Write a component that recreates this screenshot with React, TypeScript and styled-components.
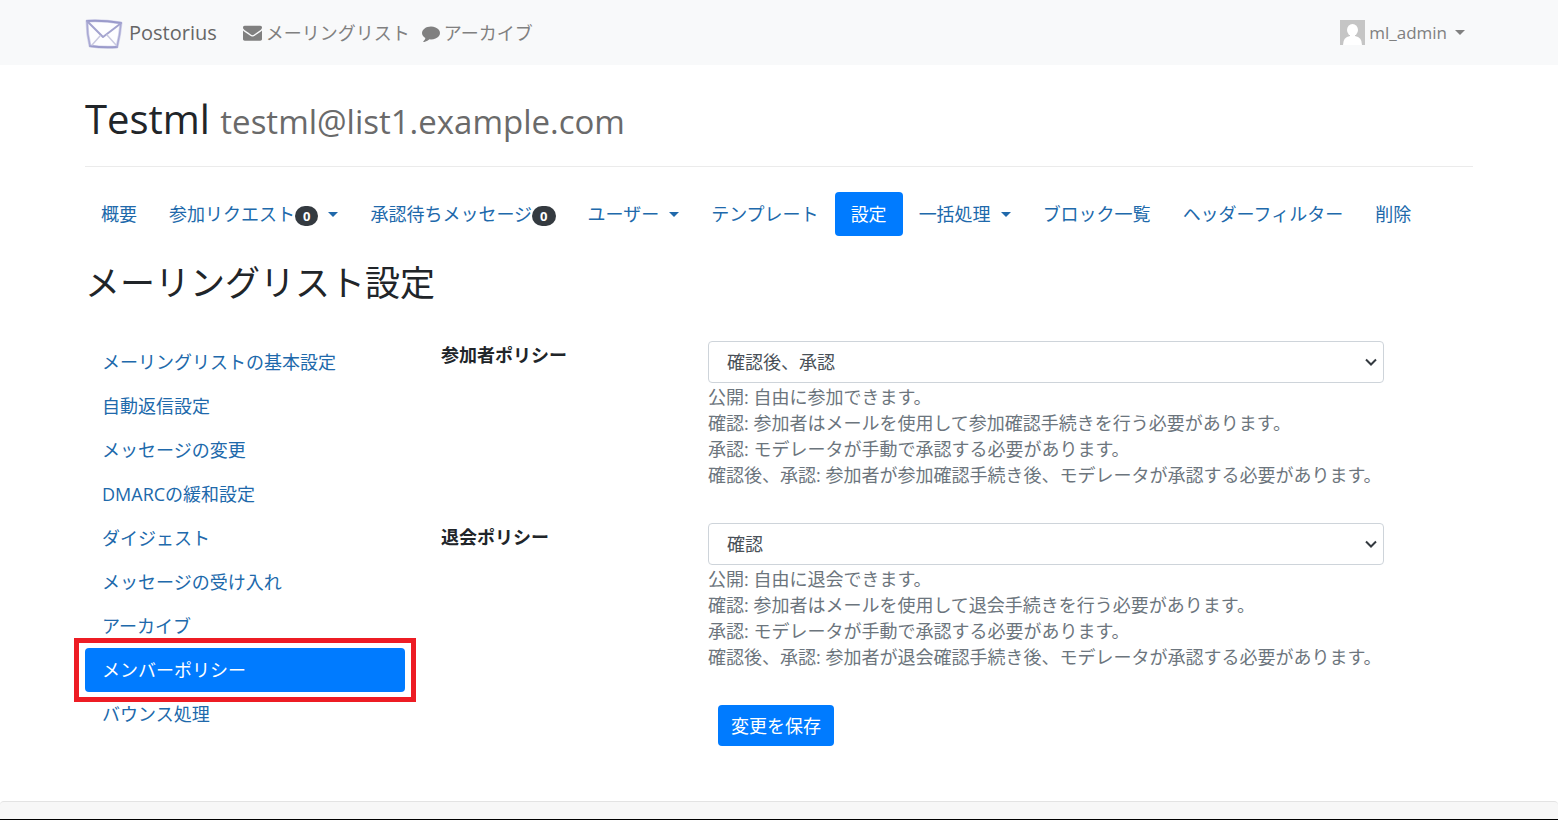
import React from 'react';
import styled, { createGlobalStyle, css } from 'styled-components';

const GlobalStyle = createGlobalStyle`
  *, *::before, *::after { box-sizing: border-box; }
  body {
    margin: 0;
    background: #fff;
    color: #212529;
    font-family: "Open Sans", "Noto Sans CJK JP", sans-serif;
    font-size: 18px;
    line-height: 26px;
  }
`;

const Page = styled.div`
  min-height: 100vh;
  display: flex;
  flex-direction: column;
`;

const Navbar = styled.header`
  display: flex;
  align-items: center;
  height: 65px;
  padding: 0 85px;
  background: #f8f9fa;
`;

const Brand = styled.a`
  display: flex;
  align-items: center;
  gap: 6px;
  margin-right: 26px;
  color: #666;
  font-size: 20px;
  text-decoration: none;
`;

const MainLinks = styled.nav`
  display: flex;
  flex: 1;
  gap: 12px;
`;

const TopLink = styled.a`
  display: flex;
  align-items: center;
  gap: 4px;
  color: #808080;
  font-size: 18px;
  text-decoration: none;
  white-space: nowrap;
`;

const UserButton = styled.button`
  display: flex;
  align-items: center;
  gap: 4px;
  padding: 0 8px 0 0;
  border: 0;
  background: none;
  color: #808080;
  font: inherit;
  font-size: 17px;
`;

const Caret = styled.span<{ $gap: number }>`
  display: inline-block;
  margin-left: ${(p) => p.$gap}px;
  border: 5px solid transparent;
  border-top-color: currentColor;
  border-bottom: 0;
`;

const Main = styled.main`
  flex: 1;
  padding: 24px 85px 55px;
`;

const Title = styled.h1`
  margin: 0;
  padding-bottom: 17px;
  border-bottom: 1px solid #ebebeb;
  font-size: 40px;
  font-weight: 400;
  line-height: 60px;
`;

const Address = styled.small`
  color: #6a6a6a;
  font-size: 33px;
  line-height: 1;
`;

const Tabs = styled.nav`
  display: flex;
  flex-wrap: wrap;
  margin-top: 25px;
`;

const activeLink = css`
  background: #007bff;
  color: #fff;
`;

const Tab = styled.a<{ $active?: boolean }>`
  display: flex;
  align-items: center;
  height: 44px;
  padding: 0 16px;
  border-radius: 4px;
  color: #2069ab;
  text-decoration: none;
  white-space: nowrap;
  ${(p) => p.$active && activeLink}
`;

const Badge = styled.span`
  margin-top: 4px;
  padding: 0 8px;
  border-radius: 10px;
  background: #343a40;
  color: #fff;
  font-size: 13px;
  font-weight: 700;
  line-height: 20px;
`;

const Heading = styled.h2`
  margin: 26px 0 36px;
  font-size: 35px;
  font-weight: 400;
  line-height: 42px;
`;

const Columns = styled.div`
  display: grid;
  grid-template-columns: repeat(12, minmax(0, 1fr));
  column-gap: 36px;
`;

const Sidebar = styled.nav`
  grid-column: span 3;
  display: flex;
  flex-direction: column;
`;

const SideLink = styled.a<{ $active?: boolean }>`
  position: relative;
  display: flex;
  align-items: center;
  height: 44px;
  padding: 0 17px;
  border-radius: 4px;
  color: #2069ab;
  text-decoration: none;
  white-space: nowrap;
  ${(p) => p.$active && css`
    ${activeLink}
    &::after {
      content: "";
      position: absolute;
      inset: -10px -11px;
      border: 5px solid #ed1c24;
    }
  `}
`;

const Form = styled.form`
  grid-column: span 9;
  padding-top: 1px;
`;

const Group = styled(Columns)`
  margin-bottom: 35px;
`;

const Label = styled.label`
  grid-column: span 3;
  padding-top: 1px;
  font-weight: 700;
`;

const Field = styled.div`
  grid-column: span 8;
`;

const Actions = styled.div`
  grid-column: 4 / span 8;
  padding-left: 10px;
`;

const SelectBox = styled.div`
  position: relative;
  margin-bottom: 1px;
`;

const Select = styled.select`
  display: block;
  width: 100%;
  height: 42px;
  padding: 0 18px;
  border: 1px solid #ced4da;
  border-radius: 4px;
  appearance: none;
  background: #fff;
  color: #495057;
  font: inherit;
`;

const Chevron = styled.svg`
  position: absolute;
  top: 17px;
  right: 7px;
  pointer-events: none;
`;

const Help = styled.div`
  color: #6c757d;
  white-space: nowrap;
`;

const SaveButton = styled.button`
  display: block;
  height: 41px;
  padding: 0 13px;
  border: 0;
  border-radius: 4px;
  background: #007bff;
  color: #fff;
  font: inherit;
`;

const Footer = styled.footer`
  height: 19px;
  border-bottom: 1px solid #000;

  &::before {
    content: "";
    display: block;
    height: 18px;
    border-top: 1px solid #e3e3e3;
    border-radius: 4px 4px 0 0;
    background: #f7f7f7;
  }
`;

const Logo = () => (
  <svg width="38" height="32" viewBox="0 0 38 32" fill="none" strokeLinecap="round" strokeLinejoin="round" aria-hidden="true">
    <path d="M2 4 Q18 3 36 6 Q35 18 32 30 Q18 31 5 29 Q2 17 2 4 Z" fill="#fdfdff" stroke="#d3d3ea" strokeWidth="3" />
    <path d="M2 4 Q18 3 36 6 M5 29 Q18 31 32 30" stroke="#9a9acb" strokeWidth="2" />
    <path d="M2 4 Q2 17 5 29 M36 6 Q35 18 32 30" stroke="#a9a9d3" strokeWidth="1.5" />
    <path d="M3 5 L18 20 L35 7" stroke="#a3a3cf" strokeWidth="2" />
    <path d="M15 19 L7 28 M22 18 L31 28" stroke="#c9c9e0" strokeWidth="1.5" />
  </svg>
);

const Envelope = () => (
  <svg width="19" height="19" viewBox="0 0 1792 1792" fill="currentColor" aria-hidden="true">
    <path d="M1792 710v794q0 66-47 113t-113 47h-1472q-66 0-113-47t-47-113v-794q44 49 101 87 362 246 497 345 57 42 92.500 65.500t94.500 48 110 24.500h2q51 0 110-24.500t94.500-48 92.500-65.500q170-123 498-345 57-39 100-87zm0-294q0 79-49 151t-122 123q-376 261-468 325-10 7-42.500 30.500t-54 38-52 32.500-57.500 27-50 9h-2q-23 0-50-9t-57.500-27-52-32.500-54-38-42.500-30.500q-91-64-262-182.500t-205-142.500q-62-42-117-115.500t-55-136.500q0-78 41.500-130t118.500-52h1472q65 0 112.500 47t47.500 113z" />
  </svg>
);

const Comment = () => (
  <svg width="18" height="18" viewBox="0 0 1792 1792" fill="currentColor" aria-hidden="true">
    <path d="M1792 896q0 174-120 321.500t-326 233-450 85.500q-70 0-145-8-198 175-460 242-49 14-114 22-17 2-30.500-9t-17.500-29v-1q-3-4-.5-12t2-10 4.500-9.500l6-9 7-8.500 8-9q7-8 31-34.500t34.500-38 31-39.500 32.500-51 27-59 26-76q-157-89-247.500-220t-90.500-281q0-130 71-248.500t191-204.500 286-136.500 348-50.500q244 0 450 85.500t326 233 120 321.500z" />
  </svg>
);

const Avatar = () => (
  <svg width="25" height="25" viewBox="0 0 25 25" aria-hidden="true">
    <rect width="25" height="25" fill="#c5c5c5" />
    <ellipse cx="12.500" cy="10" rx="5.500" ry="6" fill="#fff" />
    <path d="M10 14 H15 V16 Q22 17 22 25 H3 Q3 17 10 16 Z" fill="#fff" />
  </svg>
);

type TabItem = { text: string; badge?: string; menu?: boolean; active?: boolean };

const tabs: TabItem[] = [
  { text: '概要' },
  { text: '参加リクエスト', badge: '0', menu: true },
  { text: '承認待ちメッセージ', badge: '0' },
  { text: 'ユーザー', menu: true },
  { text: 'テンプレート' },
  { text: '設定', active: true },
  { text: '一括処理', menu: true },
  { text: 'ブロック一覧' },
  { text: 'ヘッダーフィルター' },
  { text: '削除' },
];

const sections = [
  'メーリングリストの基本設定',
  '自動返信設定',
  'メッセージの変更',
  'DMARCの緩和設定',
  'ダイジェスト',
  'メッセージの受け入れ',
  'アーカイブ',
  'メンバーポリシー',
  'バウンス処理',
];

const options = ['公開', '確認', '承認', '確認後、承認'];

type PolicyProps = { id: string; label: string; value: string; help: string[] };

const Policy = ({ id, label, value, help }: PolicyProps) => (
  <Group>
    <Label htmlFor={id}>{label}</Label>
    <Field>
      <SelectBox>
        <Select id={id} defaultValue={value}>
          {options.map((o) => <option key={o}>{o}</option>)}
        </Select>
        <Chevron width="12" height="9" viewBox="0 0 12 9" fill="none" stroke="#343a40" strokeWidth="2" aria-hidden="true">
          <path d="M1 1.500 L6 6.500 L11 1.500" />
        </Chevron>
      </SelectBox>
      <Help>{help.map((line) => <div key={line}>{line}</div>)}</Help>
    </Field>
  </Group>
);

export default function App() {
  return (
    <Page>
      <GlobalStyle />
      <Navbar>
        <Brand href="#"><Logo />Postorius</Brand>
        <MainLinks>
          <TopLink href="#"><Envelope />メーリングリスト</TopLink>
          <TopLink href="#"><Comment />アーカイブ</TopLink>
        </MainLinks>
        <UserButton type="button"><Avatar />ml_admin<Caret $gap={4} /></UserButton>
      </Navbar>
      <Main>
        <Title>Testml <Address>testml@list1.example.com</Address></Title>
        <Tabs>
          {tabs.map((t) => (
            <Tab key={t.text} href="#" $active={t.active}>
              {t.text}
              {t.badge && <Badge>{t.badge}</Badge>}
              {t.menu && <Caret $gap={10} />}
            </Tab>
          ))}
        </Tabs>
        <Heading>メーリングリスト設定</Heading>
        <Columns>
          <Sidebar>
            {sections.map((s) => (
              <SideLink key={s} href="#" $active={s === 'メンバーポリシー'}>{s}</SideLink>
            ))}
          </Sidebar>
          <Form>
            <Policy
              id="subscription"
              label="参加者ポリシー"
              value="確認後、承認"
              help={[
                '公開: 自由に参加できます。',
                '確認: 参加者はメールを使用して参加確認手続きを行う必要があります。',
                '承認: モデレータが手動で承認する必要があります。',
                '確認後、承認: 参加者が参加確認手続き後、モデレータが承認する必要があります。',
              ]}
            />
            <Policy
              id="unsubscription"
              label="退会ポリシー"
              value="確認"
              help={[
                '公開: 自由に退会できます。',
                '確認: 参加者はメールを使用して退会手続きを行う必要があります。',
                '承認: モデレータが手動で承認する必要があります。',
                '確認後、承認: 参加者が退会確認手続き後、モデレータが承認する必要があります。',
              ]}
            />
            <Columns>
              <Actions>
                <SaveButton type="button">変更を保存</SaveButton>
              </Actions>
            </Columns>
          </Form>
        </Columns>
      </Main>
      <Footer />
    </Page>
  );
}
